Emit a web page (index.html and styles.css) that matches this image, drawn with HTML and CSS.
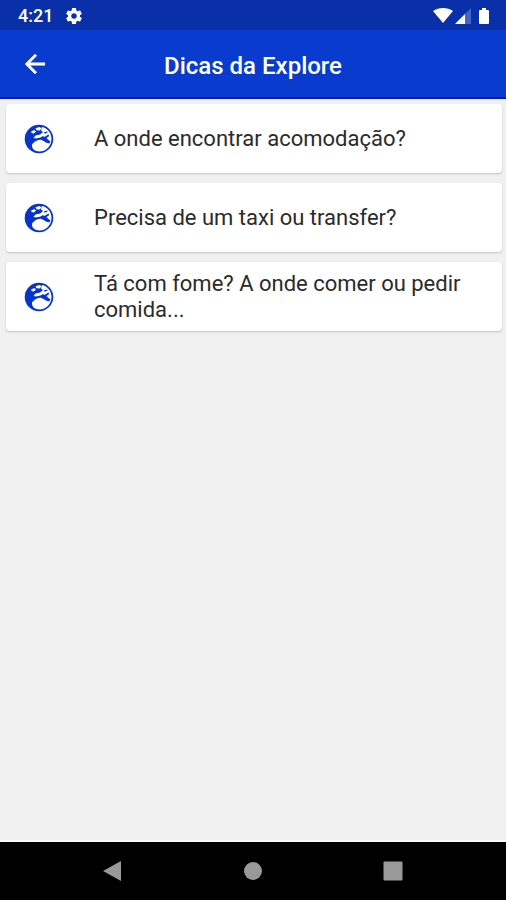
FILE: index.html
```html
<!DOCTYPE html>
<html lang="pt">
<head>
<meta charset="utf-8">
<meta name="viewport" content="width=device-width, initial-scale=1">
<title>Dicas da Explore</title>
<link rel="stylesheet" href="styles.css">
</head>
<body>
<svg class="defs" aria-hidden="true">
  <symbol id="earth" viewBox="0 0 30 30">
    <circle cx="15" cy="15" r="14.3" fill="#0834cc"/>
    <path fill="#fff" d="M18 3C23.500 4 27.500 9 27.500 15C27.500 21.500 22.500 27.400 15.500 27.400C11 27.400 8 25 8 21.500C8 18.500 10 16.500 12 14.500L9.500 14L11.500 11.500L16 10.500L19 8L17 6.500Z"/>
    <path fill="#fff" d="M11.500 4.300L15.500 3L17.500 4.200L15.800 6.400L12.500 6.200ZM7.200 7.500L10.300 6L12 7.400L9.800 9.500L7.500 9Z"/>
    <path fill="#0834cc" d="M7 15.800L12 14.500L16.500 13.500L18.500 12.300L21 12.800L24.300 10.500L25.300 12L22.500 14L25 16.500L26.500 17L25.300 19.500L22.500 18.800L19.500 17L17 15.700C14 15.500 11.500 16.500 9 19.500L6.500 20Z"/>
    <path fill="#0834cc" d="M20 8.300L23.300 7.500L23.600 8.600L20.500 9.800ZM13 9.800L15.500 8L18 7.700L17 9.500L14 10.800Z"/>
  </symbol>
</svg>
<div class="screen">
  <div class="status">
    <div class="status-left">
      <span>4:21</span>
      <svg class="gear" viewBox="2 2 20 20"><path fill="#fff" d="M19.43 12.98c.04-.32.07-.64.07-.98s-.03-.66-.07-.98l2.11-1.65c.19-.15.24-.42.12-.64l-2-3.46c-.12-.22-.39-.3-.61-.22l-2.49 1c-.52-.4-1.08-.73-1.69-.98l-.38-2.65C14.46 2.18 14.25 2 14 2h-4c-.25 0-.46.18-.49.42l-.38 2.65c-.61.25-1.17.59-1.69.98l-2.49-1c-.23-.09-.49 0-.61.22l-2 3.46c-.13.22-.07.49.12.64l2.11 1.65c-.04.32-.07.65-.07.98s.03.66.07.98l-2.11 1.65c-.19.15-.24.42-.12.64l2 3.46c.12.22.39.3.61.22l2.49-1c.52.4 1.08.73 1.69.98l.38 2.65c.03.24.24.42.49.42h4c.25 0 .46-.18.49-.42l.38-2.65c.61-.25 1.17-.59 1.69-.98l2.49 1c.23.09.49 0 .61-.22l2-3.46c.12-.22.07-.49-.12-.64l-2.11-1.65zM12 15.5c-1.93 0-3.5-1.57-3.5-3.5s1.57-3.5 3.5-3.5 3.5 1.57 3.5 3.5-1.57 3.5-3.5 3.5z"/></svg>
    </div>
    <svg class="signals" viewBox="0 0 58 18">
      <path fill="#fff" d="M0 4C5.500 0 14.500 0 20 4L10 16Z"/>
      <path fill="#4565c6" d="M38 1V17H22Z"/>
      <path fill="#fff" d="M32 7V17H22Z"/>
      <path fill="#fff" d="M49 1H53V3H55Q56 3 56 4V16Q56 17 55 17H47Q46 17 46 16V4Q46 3 47 3H49Z"/>
    </svg>
  </div>
  <header class="appbar">
    <button class="back" type="button" aria-label="Voltar">
      <svg viewBox="4 4 16 16"><path fill="#fff" stroke="#fff" stroke-width="0.400" d="M20 11H7.830l5.590-5.590L12 4l-8 8 8 8 1.410-1.410L7.830 13H20v-2z"/></svg>
    </button>
    <h1>Dicas da Explore</h1>
  </header>
  <main class="list">
    <a class="card" href="#acomodacao"><svg class="icon"><use href="#earth"/></svg><span>A onde encontrar acomodação?</span></a>
    <a class="card" href="#transfer"><svg class="icon"><use href="#earth"/></svg><span>Precisa de um taxi ou transfer?</span></a>
    <a class="card" href="#comida"><svg class="icon"><use href="#earth"/></svg><span>Tá com fome? A onde comer ou pedir comida...</span></a>
  </main>
  <nav class="navbar">
    <button type="button" aria-label="Anterior"><svg viewBox="0 0 20 20"><path fill="#999" d="M18 0V20L0 10Z"/></svg></button>
    <button type="button" aria-label="Início"><svg viewBox="0 0 20 20"><circle cx="10" cy="10" r="9" fill="#999"/></svg></button>
    <button type="button" aria-label="Recentes"><svg viewBox="0 0 20 20"><rect x="0.500" y="0.500" width="19" height="19" rx="1" fill="#999"/></svg></button>
  </nav>
</div>
</body>
</html>
```
FILE: styles.css
```css
* { box-sizing: border-box; }
body {
  margin: 0;
  font-family: Roboto, "Liberation Sans", sans-serif;
  background: #f0f0f0;
}
.defs { display: none; }
.screen {
  min-height: 100vh;
  display: flex;
  flex-direction: column;
}
button {
  border: 0;
  padding: 0;
  background: none;
  display: flex;
}
.status {
  height: 30px;
  padding: 2px 15px 0 18px;
  background: #092fa9;
  color: #fff;
  display: flex;
  align-items: center;
  justify-content: space-between;
  font-size: 18px;
  line-height: 22px;
  font-weight: 500;
}
.status-left {
  display: flex;
  align-items: center;
  gap: 13px;
}
.gear { width: 16px; height: 16px; }
.signals { width: 58px; height: 18px; }
.appbar {
  height: 69px;
  padding: 0 25px;
  background: #083bce;
  border-bottom: 2px solid #0714b0;
  color: #fff;
  display: grid;
  grid-template-columns: 20px 1fr 20px;
  align-items: center;
}
.back svg { width: 20px; height: 20px; }
h1 {
  margin: 0;
  padding-top: 4px;
  font-size: 24px;
  line-height: 28px;
  font-weight: 500;
  text-align: center;
}
.list {
  flex: 1;
  padding: 5px 4px 5px 6px;
  display: flex;
  flex-direction: column;
  gap: 10px;
  border-bottom: 2px solid #fafafa;
}
.card {
  min-height: 69px;
  padding: 9px 20px 8px 18px;
  display: flex;
  align-items: center;
  gap: 40px;
  background: #fff;
  border-radius: 4px;
  box-shadow: 0 1px 2px rgba(0, 0, 0, 0.2);
  color: #2b2b2b;
  font-size: 22px;
  line-height: 26px;
  text-decoration: none;
}
.icon { width: 30px; height: 30px; flex: none; }
.navbar {
  height: 58px;
  padding: 0 43px;
  background: #000;
  display: grid;
  grid-template-columns: repeat(3, 1fr);
  align-items: center;
  justify-items: center;
}
.navbar svg { width: 20px; height: 20px; }
```
